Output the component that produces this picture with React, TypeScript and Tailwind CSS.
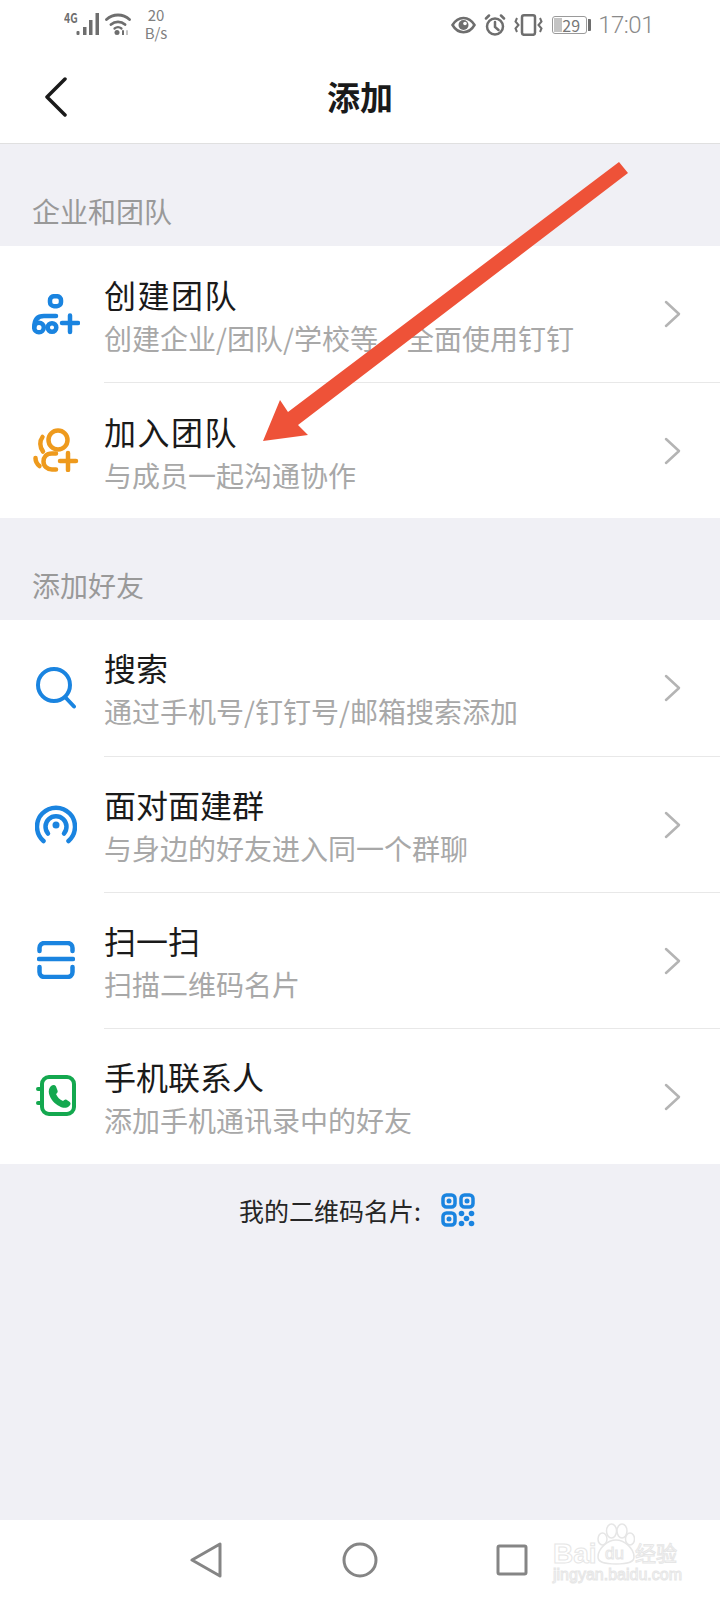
const FONT = "font-['Noto_Sans_CJK_SC','Noto_Sans',sans-serif]"

function OrgIcon() {
  return (
    <svg viewBox="0 0 48 41" className="h-[41px] w-[48px] fill-none stroke-[#1a84e0] stroke-[4.5]" strokeLinecap="round">
      <rect x="18" y="2.2" width="11" height="10" rx="4" />
      <circle cx="7" cy="33.5" r="4.8" />
      <circle cx="20" cy="33.5" r="4.3" />
      <path d="M2.3 33C2.3 25 6 22 12 22H24" />
      <path d="M30 29H46M38 21.500V38" />
    </svg>
  )
}

function JoinIcon() {
  return (
    <svg viewBox="0 0 46 44" className="h-[44px] w-[46px] fill-none stroke-[#ee9a1d] stroke-[4.5]" strokeLinecap="round">
      <circle cx="25" cy="12" r="9.500" />
      <path d="M9.500 9C6.500 13 6.500 19 10 23.500" />
      <path d="M2.500 30C2.500 33 4 36 6.500 38" />
      <path d="M23 25.500H19C13 25.500 10.500 29.500 10.500 33.500C10.500 38 14 41.500 19 41.500H23" />
      <path d="M27 33H43M35 25V42" />
    </svg>
  )
}

function SearchIcon() {
  return (
    <svg viewBox="0 0 40 42" className="h-[42px] w-[40px] fill-none stroke-[#1a84e0] stroke-[4]" strokeLinecap="round">
      <circle cx="18" cy="18" r="16" />
      <path d="M29.500 30.500L38 39.500" />
    </svg>
  )
}

function RadarIcon() {
  return (
    <svg viewBox="0 0 42 40" className="h-[40px] w-[42px] fill-none stroke-[#1a84e0] stroke-[4.5]" strokeLinecap="round">
      <path d="M8.500 37A19 19 0 1 1 33.500 37" />
      <path d="M13 29.500A10.500 10.500 0 1 1 29 29.500" />
      <circle cx="21" cy="21" r="3.500" className="fill-[#1a84e0] stroke-none" />
    </svg>
  )
}

function ScanIcon() {
  return (
    <svg viewBox="0 0 38 38" className="h-[38px] w-[38px] fill-none stroke-[#1a84e0] stroke-[4.5]" strokeLinecap="round">
      <path d="M2.500 10V7A5 5 0 0 1 7.500 2H30.500A5 5 0 0 1 35.500 7V10" />
      <path d="M2 18H36" />
      <path d="M2.500 26V31A5 5 0 0 0 7.500 36H30.500A5 5 0 0 0 35.500 31V26" />
    </svg>
  )
}

function ContactIcon() {
  return (
    <svg viewBox="0 0 40 42" className="h-[42px] w-[40px] fill-none">
      <rect x="6" y="2" width="32" height="37" rx="7" className="stroke-[#14a84f] stroke-[4]" />
      <path d="M2 14H6M2 28H6" className="stroke-[#14a84f] stroke-[4]" strokeLinecap="round" />
      <path
        d="M15 11c2-1.500 4-1.500 5 .5l1.500 4c.5 1.300 0 2.300-1.500 3.500 1.500 3.500 3.500 5.500 7 7 1.200-1.300 2.300-1.800 3.500-1.300l3 2c1.500 1 1.500 3-.5 4.500-2.500 2-6 2-9.500 0-5-2.500-9-7-10.500-12.500-.7-3.200.2-6 2-7.700z"
        className="fill-[#14a84f]"
      />
    </svg>
  )
}

function QrIcon() {
  return (
    <svg viewBox="0 0 34 34" className="h-[34px] w-[34px]">
      <g className="fill-none stroke-[#1a84e0] stroke-[3.5]">
        <rect x="2" y="2" width="12" height="12" rx="3.500" />
        <rect x="20" y="2" width="12" height="12" rx="3.500" />
        <rect x="2" y="20" width="12" height="12" rx="3.500" />
      </g>
      <g className="fill-[#1a84e0]">
        <circle cx="8" cy="8" r="2.500" />
        <circle cx="26" cy="8" r="2.500" />
        <circle cx="8" cy="26" r="2.500" />
        <circle cx="20.500" cy="20.500" r="2.800" />
        <circle cx="30.500" cy="20.500" r="2.800" />
        <circle cx="25.500" cy="25.500" r="2.800" />
        <circle cx="20.500" cy="30.500" r="2.800" />
        <circle cx="30.500" cy="30.500" r="2.800" />
      </g>
    </svg>
  )
}

function Chevron() {
  return (
    <svg viewBox="0 0 18 28" className="h-[28px] w-[18px] fill-none stroke-[#b4b4b4] stroke-[2.5]" strokeLinecap="round" strokeLinejoin="round">
      <path d="M2 2l13 12L2 26" />
    </svg>
  )
}

interface RowProps {
  icon: React.ReactNode
  title: string
  sub: string
  first?: boolean
  wide?: boolean
}

function Row({ icon, title, sub, first, wide }: RowProps) {
  return (
    <div className="flex h-[136px] items-stretch">
      <div className="flex w-[104px] shrink-0 items-center justify-center pl-[8px]">{icon}</div>
      <div className={`flex flex-1 items-center pr-[38px] pl-[1px] ${first ? '' : 'border-t border-[#e8e8e8]'}`}>
        <div className={`min-w-0 flex-1 ${wide ? 'pt-[3px]' : 'pt-[1px]'}`}>
          <p className={`-ml-[1px] h-[44px] text-[32px] leading-[44px] text-[#1a1a1a] ${wide ? 'tracking-[1.5px]' : ''}`}>{title}</p>
          <p className="-ml-[1px] h-[43px] text-[28px] leading-[44px] text-[#a8a8a8]">{sub}</p>
        </div>
        <Chevron />
      </div>
    </div>
  )
}

function StatusBar() {
  return (
    <div className="flex h-[48px] items-start justify-between pl-[64px] pr-[66px] pt-[6px] text-[#6e6e6e]">
      <div className="flex items-start">
        <span className="mt-[5px] w-[12px] origin-left scale-x-[0.8] text-[13px] leading-[14px] font-bold whitespace-nowrap">4G</span>
        <svg viewBox="0 0 23 22" className="mt-[7px] h-[22px] w-[23px] fill-[#6e6e6e]">
          <rect x="0.500" y="18" width="3" height="4" rx="1" />
          <rect x="7" y="14" width="3.500" height="8" />
          <rect x="13" y="7" width="3.500" height="15" />
          <rect x="19.500" y="0" width="3.500" height="22" />
        </svg>
        <svg viewBox="0 0 27 22" className="ml-[6px] mt-[7px] h-[22px] w-[27px] fill-none stroke-[#6e6e6e] stroke-[2.8]" strokeLinecap="round">
          <path d="M1.500 6.500C8 0.500 18 0.500 24.500 6.500M6 11.500C10 8 16 8 20 11.500" />
          <path d="M9.500 15.500C11.500 14 14.500 14 16.500 15.500" className="stroke-[2.2]" />
          <circle cx="12" cy="19.500" r="2.500" className="fill-[#6e6e6e] stroke-none" />
          <path d="M18 18v4" className="stroke-[#6e6e6e] stroke-[2]" />
          <path d="M22 18v4" className="stroke-[#c4c4c4] stroke-[2]" />
        </svg>
        <div className="ml-[13px] flex w-[22px] flex-col items-center text-[15px] leading-[18px] text-[#808080]">
          <span>20</span>
          <span>B/s</span>
        </div>
      </div>
      <div className="mt-[7px] flex items-center">
        <svg viewBox="0 0 25 18" className="h-[18px] w-[25px]">
          <path d="M1.500 9C7 -0.500 18 -0.500 23.500 9 18 18.500 7 18.500 1.500 9z" className="fill-none stroke-[#6e6e6e] stroke-[2.5]" />
          <circle cx="12.500" cy="9" r="5" className="fill-[#6e6e6e]" />
          <circle cx="14" cy="7.500" r="1.800" className="fill-white" />
        </svg>
        <svg viewBox="0 0 22 22" className="ml-[8px] h-[22px] w-[22px] fill-none stroke-[#6e6e6e] stroke-[2.5]" strokeLinecap="round">
          <circle cx="11" cy="12.500" r="8" />
          <path d="M11 8v5l3.500 3M2 4.500L5 1.500M20 4.500L17 1.500" />
        </svg>
        <svg viewBox="0 0 29 22" className="ml-[8px] h-[22px] w-[29px] fill-none stroke-[#6e6e6e] stroke-[2.5]">
          <rect x="8" y="1.300" width="13" height="19.500" rx="2" />
          <path d="M3 4L1.500 7.500 4.500 11 1.500 14.500 3 18M26 4L27.500 7.500 24.500 11 27.500 14.500 26 18" className="stroke-[2]" />
        </svg>
        <div className="ml-[9px] flex items-center">
          <div className="relative h-[18px] w-[35px] rounded-[3px] border border-[#9a9a9a] text-center text-[16px] leading-[16px] text-[#777]">
            <div className="absolute inset-y-[1px] left-[1px] w-[8px] bg-[#c4c4c4]" />
            <span className="relative pl-[3px]">29</span>
          </div>
          <div className="ml-[1px] h-[12px] w-[3px] rounded-r-[1px] bg-[#6e6e6e]" />
        </div>
        <span className="ml-[7px] font-['Roboto',sans-serif] text-[24px] leading-[24px] font-light tracking-[-0.5px] text-[#8a8a8a]">17:01</span>
      </div>
    </div>
  )
}

export default function App() {
  return (
    <div className={`relative flex h-[1600px] w-[720px] flex-col overflow-hidden bg-[#f0f0f5] ${FONT}`}>
      <div className="bg-white">
        <StatusBar />
        <div className="relative flex h-[96px] items-center justify-center border-b border-[#e0e0e0]">
          <svg viewBox="0 0 24 40" className="absolute left-[44px] top-[29px] h-[40px] w-[24px] fill-none stroke-[#1a1a1a] stroke-[3.5]" strokeLinecap="round" strokeLinejoin="round">
            <path d="M21 2L3 20l18 18" />
          </svg>
          <h1 className="text-[33px] leading-[44px] font-bold text-[#1a1a1a]">添加</h1>
        </div>
      </div>

      <p className="flex h-[102px] items-end pb-[13px] pl-[32px] text-[28px] leading-[44px] text-[#999999]">企业和团队</p>
      <div className="bg-white">
        <Row first wide icon={<OrgIcon />} title="创建团队" sub="创建企业/团队/学校等，全面使用钉钉" />
        <Row wide icon={<JoinIcon />} title="加入团队" sub="与成员一起沟通协作" />
      </div>

      <p className="flex h-[102px] items-end pb-[13px] pl-[32px] text-[28px] leading-[44px] text-[#999999]">添加好友</p>
      <div className="bg-white">
        <Row first icon={<SearchIcon />} title="搜索" sub="通过手机号/钉钉号/邮箱搜索添加" />
        <Row icon={<RadarIcon />} title="面对面建群" sub="与身边的好友进入同一个群聊" />
        <Row icon={<ScanIcon />} title="扫一扫" sub="扫描二维码名片" />
        <Row icon={<ContactIcon />} title="手机联系人" sub="添加手机通讯录中的好友" />
      </div>

      <div className="flex items-center justify-center gap-[20px] pt-[28px] pr-[6px]">
        <span className="text-[25px] leading-[36px] text-[#262626]">我的二维码名片:</span>
        <QrIcon />
      </div>

      <div className="mt-auto flex h-[80px] items-center bg-white pl-[190px]">
        <svg viewBox="0 0 32 36" className="h-[36px] w-[32px] fill-none stroke-[#858585] stroke-[3]" strokeLinejoin="round">
          <path d="M30 2v32L2 18z" />
        </svg>
        <svg viewBox="0 0 36 36" className="ml-[120px] h-[36px] w-[36px] fill-none stroke-[#858585] stroke-[3]">
          <circle cx="18" cy="18" r="16" />
        </svg>
        <svg viewBox="0 0 32 32" className="ml-[118px] h-[32px] w-[32px] fill-none stroke-[#858585] stroke-[3]" strokeLinejoin="round">
          <rect x="2" y="2" width="28" height="28" rx="1.5" />
        </svg>
      </div>

      {/* annotation arrow drawn over the screenshot */}
      <svg viewBox="0 0 720 1600" className="pointer-events-none absolute inset-0 h-[1600px] w-[720px]">
        <path d="M619 162L628 173L298 425L308 435L263 441L280 400L288 412z" className="fill-[#ee5238]" />
      </svg>

      {/* baidu watermark */}
      <div className="pointer-events-none absolute left-[553px] top-[1523px] h-[62px] w-[130px] font-['Liberation_Sans',sans-serif] text-white [-webkit-text-stroke:1px_#e6e6e6]">
        <svg viewBox="0 0 38 42" className="absolute left-[44px] top-0 h-[42px] w-[38px] fill-white stroke-[#e6e6e6] stroke-[1.5]">
          <ellipse cx="5.500" cy="16" rx="4.500" ry="6" />
          <ellipse cx="14.500" cy="8" rx="5" ry="7" />
          <ellipse cx="25" cy="8" rx="5" ry="7" />
          <ellipse cx="33" cy="16" rx="4.500" ry="6" />
          <path d="M19 17C27 17 37 25 37 34C37 39 32 41 19 41S1 39 1 34C1 25 11 17 19 17z" />
        </svg>
        <span className="absolute left-0 top-[15px] text-[28px] leading-[32px] font-bold">Bai</span>
        <span className="absolute left-[52px] top-[21px] text-[17px] leading-[20px]">du</span>
        <span className={`absolute left-[82px] top-[15px] text-[21px] leading-[28px] ${FONT}`}>经验</span>
        <span className="absolute left-0 top-[43px] text-[16px] leading-[18px]">jingyan.baidu.com</span>
      </div>
    </div>
  )
}
